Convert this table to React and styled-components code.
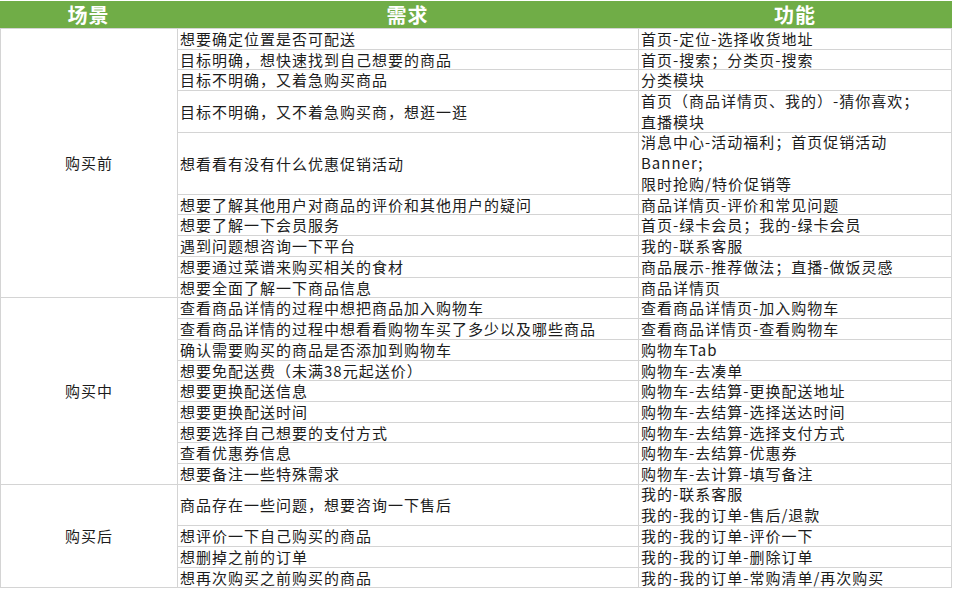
import React from "react";
import styled, { createGlobalStyle } from "styled-components";

const Global = createGlobalStyle`
  html, body { margin: 0; padding: 0; background: #ffffff; }
  body { font-family: "Noto Sans CJK SC", "Noto Sans", sans-serif; }
`;

const UNIT = 20.72;
const TOP = 28;

const sections = [
  {
    name: "购买前",
    rows: [
      { need: "想要确定位置是否可配送", func: ["首页-定位-选择收货地址"] },
      { need: "目标明确，想快速找到自己想要的商品", func: ["首页-搜索；分类页-搜索"] },
      { need: "目标不明确，又着急购买商品", func: ["分类模块"] },
      { need: "目标不明确，又不着急购买商，想逛一逛", func: ["首页（商品详情页、我的）-猜你喜欢；", "直播模块"], u: 2 },
      { need: "想看看有没有什么优惠促销活动", func: ["消息中心-活动福利；首页促销活动", "Banner;", "限时抢购/特价促销等"], u: 3 },
      { need: "想要了解其他用户对商品的评价和其他用户的疑问", func: ["商品详情页-评价和常见问题"] },
      { need: "想要了解一下会员服务", func: ["首页-绿卡会员；我的-绿卡会员"] },
      { need: "遇到问题想咨询一下平台", func: ["我的-联系客服"] },
      { need: "想要通过菜谱来购买相关的食材", func: ["商品展示-推荐做法；直播-做饭灵感"] },
      { need: "想要全面了解一下商品信息", func: ["商品详情页"] },
    ],
  },
  {
    name: "购买中",
    rows: [
      { need: "查看商品详情的过程中想把商品加入购物车", func: ["查看商品详情页-加入购物车"] },
      { need: "查看商品详情的过程中想看看购物车买了多少以及哪些商品", func: ["查看商品详情页-查看购物车"] },
      { need: "确认需要购买的商品是否添加到购物车", func: ["购物车Tab"] },
      { need: "想要免配送费（未满38元起送价）", func: ["购物车-去凑单"] },
      { need: "想要更换配送信息", func: ["购物车-去结算-更换配送地址"] },
      { need: "想要更换配送时间", func: ["购物车-去结算-选择送达时间"] },
      { need: "想要选择自己想要的支付方式", func: ["购物车-去结算-选择支付方式"] },
      { need: "查看优惠券信息", func: ["购物车-去结算-优惠券"] },
      { need: "想要备注一些特殊需求", func: ["购物车-去计算-填写备注"] },
    ],
  },
  {
    name: "购买后",
    rows: [
      { need: "商品存在一些问题，想要咨询一下售后", func: ["我的-联系客服", "我的-我的订单-售后/退款"], u: 2 },
      { need: "想评价一下自己购买的商品", func: ["我的-我的订单-评价一下"] },
      { need: "想删掉之前的订单", func: ["我的-我的订单-删除订单"] },
      { need: "想再次购买之前购买的商品", func: ["我的-我的订单-常购清单/再次购买"] },
    ],
  },
];

const Page = styled.div`
  padding-top: 1px;
  width: 952px;
`;

const HeaderBar = styled.div`
  display: grid;
  grid-template-columns: 177px 461px 314px;
  height: 27px;
  background: #70ad47;
`;

const HeaderCell = styled.div`
  display: flex;
  align-items: center;
  justify-content: center;
  color: #ffffff;
  font-size: 20px;
  font-weight: 700;
  letter-spacing: 1px;
  line-height: 1;
`;

const Body = styled.div`
  display: grid;
  grid-template-columns: 176px 460px 312px;
  grid-template-rows: ${(p) => p.$rows};
  gap: 1px;
  padding: 1px;
  background: #d4d4d4;
`;

const Cell = styled.div`
  background: #ffffff;
  color: #1c1c1c;
  font-size: 15px;
  letter-spacing: 1px;
  line-height: 20px;
  white-space: nowrap;
  display: flex;
  flex-direction: column;
  justify-content: center;
  padding-left: ${(p) => (p.$center ? 0 : 2)}px;
  align-items: ${(p) => (p.$center ? "center" : "flex-start")};
  grid-row: ${(p) => (p.$span ? `span ${p.$span}` : "auto")};
`;

const Line = styled.span`
  display: block;
  line-height: ${UNIT}px;
`;

export default function App() {
  const flat = [];
  sections.forEach((s) => s.rows.forEach((r) => flat.push(r.u || 1)));
  const heights = [];
  let cum = 0;
  flat.forEach((u) => {
    const a = Math.round(TOP + cum * UNIT);
    cum += u;
    const b = Math.round(TOP + cum * UNIT);
    heights.push(`${b - a - 1}px`);
  });
  const rows = heights.join(" ");

  return (
    <>
      <Global />
      <Page>
        <HeaderBar>
          <HeaderCell>场景</HeaderCell>
          <HeaderCell>需求</HeaderCell>
          <HeaderCell>功能</HeaderCell>
        </HeaderBar>
        <Body $rows={rows}>
          {sections.map((s) =>
            s.rows.map((r, i) => (
              <React.Fragment key={s.name + i}>
                {i === 0 && (
                  <Cell $center $span={s.rows.length}>
                    {s.name}
                  </Cell>
                )}
                <Cell>{r.need}</Cell>
                <Cell>
                  {r.func.length === 1
                    ? r.func[0]
                    : r.func.map((l, j) => <Line key={j}>{l}</Line>)}
                </Cell>
              </React.Fragment>
            ))
          )}
        </Body>
      </Page>
    </>
  );
}
